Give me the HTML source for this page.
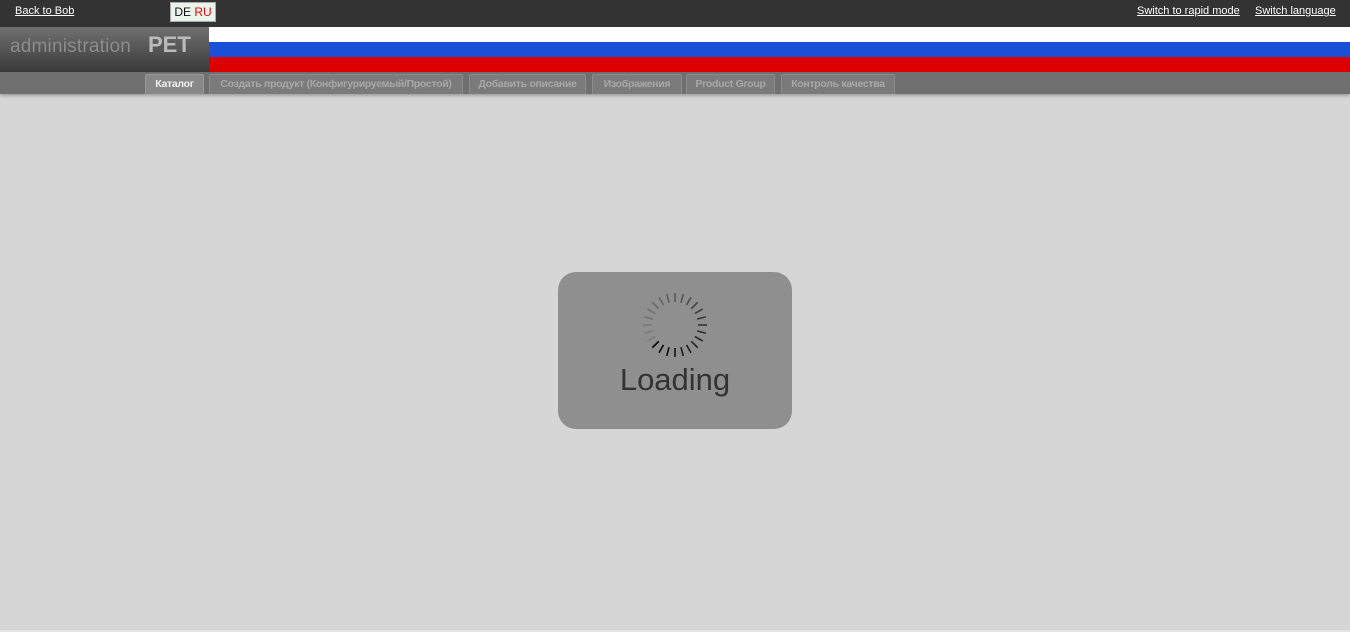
<!DOCTYPE html>
<html><head><meta charset="utf-8"><style>
*{margin:0;padding:0;box-sizing:border-box}
body{width:1350px;height:632px;background:#d6d6d6;font-family:"Liberation Sans",Arial,sans-serif;position:relative;overflow:hidden}
.top{position:absolute;left:0;top:0;width:1350px;height:27px;background:#333}
.top a{position:absolute;top:5px;color:#fff;font-size:11px;text-decoration:underline}
.lang{position:absolute;left:170px;top:2px;width:46px;height:20px;background:#e8f4ec;border:1px solid #aaa;font-size:12px;line-height:18px;text-align:center;color:#111}
.logo{position:absolute;left:0;top:27px;width:209px;height:45px;background:linear-gradient(#707070,#3a3a3a)}
.logo .a{position:absolute;left:10px;top:9px;font-size:19px;color:#8c8c8c;letter-spacing:0.2px}
.logo .p{position:absolute;left:148px;top:5px;font-size:22px;color:#bbb;font-weight:bold}
.flag{position:absolute;left:209px;top:27px;width:1141px;height:45px}
.nav{position:absolute;left:0;top:72px;width:1350px;height:22px;background:#6f6f6f;box-shadow:0 2px 3px rgba(0,0,0,.25)}
.tab{position:absolute;top:2px;height:20px;background:#7b7b7b;border:1px solid #8c8c8c;border-bottom:none;border-radius:2px 2px 0 0;color:#a8a8a8;font-size:10.5px;letter-spacing:-0.3px;font-weight:bold;line-height:18px;text-align:center;white-space:nowrap;overflow:hidden}
.tab.on{background:#888;color:#f2f2f2;border-color:#999}
.box{position:absolute;left:558px;top:272px;width:234px;height:157px;background:#8f8f8f;border-radius:18px}
.box .t{position:absolute;left:0;width:234px;top:90px;text-align:center;font-size:31px;color:#333}
.bot{position:absolute;left:0;top:630px;width:1350px;height:2px;background:#e4e4e4}
</style></head><body>
<div class="top">
<a style="left:15px">Back to Bob</a>
<div class="lang">DE <span style="color:#e00">RU</span></div>
<a style="left:1137px">Switch to rapid mode</a>
<a style="left:1255px">Switch language</a>
</div>
<div class="logo"><span class="a">administration</span><span class="p">PET</span></div>
<div class="flag"><div style="height:15px;background:#fff"></div><div style="height:15px;background:#1a4fd8"></div><div style="height:15px;background:#dd0000"></div></div>
<div class="nav">
<div class="tab on" style="left:145px;width:59px">Каталог</div>
<div class="tab" style="left:209px;width:254px">Создать продукт (Конфигурируемый/Простой)</div>
<div class="tab" style="left:469px;width:117px">Добавить описание</div>
<div class="tab" style="left:592px;width:90px">Изображения</div>
<div class="tab" style="left:686px;width:89px">Product Group</div>
<div class="tab" style="left:781px;width:114px">Контроль качества</div>
</div>
<div class="box">
<svg style="position:absolute;left:80px;top:16px" width="74" height="74" viewBox="-37 -37 74 74">
<g stroke="#000" stroke-width="1.6" stroke-linecap="butt">
<line y1="-23" y2="-32" transform="rotate(225)" opacity="1"/>
<line y1="-23" y2="-32" transform="rotate(210)" opacity=".95"/>
<line y1="-23" y2="-32" transform="rotate(195)" opacity=".9"/>
<line y1="-23" y2="-32" transform="rotate(180)" opacity=".86"/>
<line y1="-23" y2="-32" transform="rotate(165)" opacity=".82"/>
<line y1="-23" y2="-32" transform="rotate(150)" opacity=".78"/>
<line y1="-23" y2="-32" transform="rotate(135)" opacity=".74"/>
<line y1="-23" y2="-32" transform="rotate(120)" opacity=".7"/>
<line y1="-23" y2="-32" transform="rotate(105)" opacity=".66"/>
<line y1="-23" y2="-32" transform="rotate(90)" opacity=".62"/>
<line y1="-23" y2="-32" transform="rotate(75)" opacity=".58"/>
<line y1="-23" y2="-32" transform="rotate(60)" opacity=".54"/>
<line y1="-23" y2="-32" transform="rotate(45)" opacity=".5"/>
<line y1="-23" y2="-32" transform="rotate(30)" opacity=".46"/>
<line y1="-23" y2="-32" transform="rotate(15)" opacity=".42"/>
<line y1="-23" y2="-32" transform="rotate(0)" opacity=".38"/>
<line y1="-23" y2="-32" transform="rotate(-15)" opacity=".34"/>
<line y1="-23" y2="-32" transform="rotate(-30)" opacity=".3"/>
<line y1="-23" y2="-32" transform="rotate(-45)" opacity=".26"/>
<line y1="-23" y2="-32" transform="rotate(-60)" opacity=".22"/>
<line y1="-23" y2="-32" transform="rotate(-75)" opacity=".18"/>
<line y1="-23" y2="-32" transform="rotate(-90)" opacity=".15"/>
<line y1="-23" y2="-32" transform="rotate(-105)" opacity=".13"/>
<line y1="-23" y2="-32" transform="rotate(-120)" opacity=".11"/>
</g></svg>
<div class="t">Loading</div>
</div>
<div class="bot"></div>
</body></html>
